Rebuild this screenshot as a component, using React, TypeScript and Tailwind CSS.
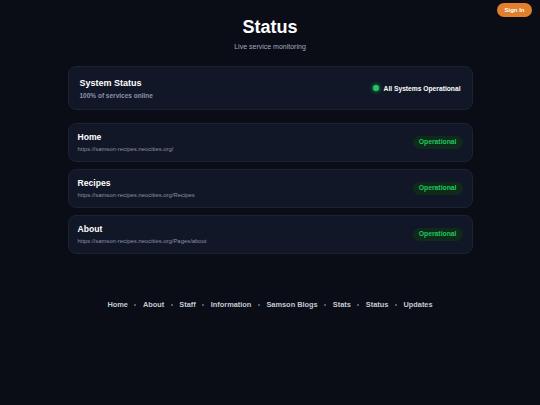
const services = [
  { name: "Home", url: "https://samson-recipes.neocities.org/" },
  { name: "Recipes", url: "https://samson-recipes.neocities.org/Recipes" },
  { name: "About", url: "https://samson-recipes.neocities.org/Pages/about" },
];

const links = [
  "Home",
  "About",
  "Staff",
  "Information",
  "Samson Blogs",
  "Stats",
  "Status",
  "Updates",
];

export default function App() {
  return (
    <div
      className="relative min-h-screen bg-[#0a0d16] text-white"
      style={{ fontFamily: '"Liberation Sans", Arial, sans-serif' }}
    >
      <button
        type="button"
        className="absolute right-[8px] top-[3px] h-[14px] w-[35px] rounded-full bg-[#e17f2c] text-[6px] font-bold leading-[14px] text-white"
      >
        Sign In
      </button>

      <div className="mx-auto w-[405px] pt-[16px]">
        <header className="text-center">
          <h1 className="text-[18px] font-bold leading-[22px]">Status</h1>
          <p className="mt-[4px] text-[7px] leading-[10px] text-[#a3aabb]">
            Live service monitoring
          </p>
        </header>

        <div className="mt-[14px] flex h-[44px] items-center justify-between rounded-[8px] border border-[#1b2233] bg-[#111726] px-[11px]">
          <div className="flex flex-col gap-[2px]">
            <span className="text-[9px] font-bold leading-[12px]">
              System Status
            </span>
            <span className="text-[6.5px] font-bold leading-[9px] text-[#8b93a7]">
              100% of services online
            </span>
          </div>
          <div className="flex items-center gap-[5px]">
            <span className="h-[6px] w-[6px] rounded-full bg-[#22c55e] shadow-[0_0_4px_#22c55e]" />
            <span className="text-[6.7px] font-bold leading-[9px]">
              All Systems Operational
            </span>
          </div>
        </div>

        <div className="mt-[13px] flex flex-col gap-[7px]">
          {services.map((s) => (
            <div
              key={s.name}
              className="flex h-[39px] items-center justify-between rounded-[8px] border border-[#1b2233] bg-[#111726] px-[9px]"
            >
              <div className="flex flex-col gap-[2px]">
                <span className="text-[8.6px] font-bold leading-[11px]">
                  {s.name}
                </span>
                <span className="text-[5.9px] leading-[8px] text-[#8a91a3]">
                  {s.url}
                </span>
              </div>
              <span className="flex h-[13px] items-center rounded-full bg-[#0d2a1a] px-[6px] text-[6.8px] font-bold text-[#22c55e]">
                Operational
              </span>
            </div>
          ))}
        </div>

        <nav className="mt-[46px] flex items-center justify-center gap-[6.5px] text-[7.4px] font-bold leading-[10px] text-[#c3c8d2]">
          {links.map((l, i) => (
            <span key={l} className="flex items-center gap-[6.5px]">
              {i > 0 && (
                <span className="h-[2px] w-[2px] rounded-full bg-[#6b7280]" />
              )}
              <span>{l}</span>
            </span>
          ))}
        </nav>
      </div>
    </div>
  );
}
